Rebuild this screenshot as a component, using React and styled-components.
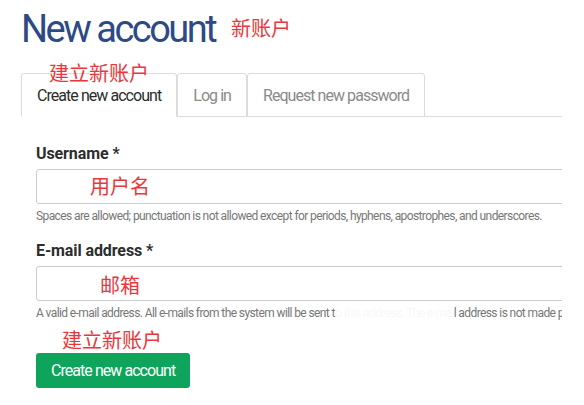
import React from 'react';
import styled, { createGlobalStyle } from 'styled-components';

const GlobalStyle = createGlobalStyle`
  html, body {
    margin: 0;
    padding: 0;
    background: #fff;
  }
  body {
    font-family: Roboto, "Noto Sans", "Noto Sans CJK SC", sans-serif;
    color: #333;
  }
`;

const tabs = [
  { label: 'Create new account', active: true, note: '建立新账户' },
  { label: 'Log in' },
  { label: 'Request new password' },
];

const App = () => {
  const fields = [
    {
      id: 'name',
      label: 'Username',
      note: '用户名',
      noteAt: { left: 54, top: 7 },
      description: 'Spaces are allowed; punctuation is not allowed except for periods, hyphens, apostrophes, and underscores.',
    },
    {
      id: 'mail',
      label: 'E-mail address',
      note: '邮箱',
      noteAt: { left: 64, top: 9 },
      description: (
        <>
          A valid e-mail address. All e-mails from the system will be sent t
          <Erased>o this address. The e-mai</Erased>
          l address is not made public and will only be used if you wish to receive a new password.
        </>
      ),
    },
  ];

  return (
    <>
      <GlobalStyle />
      <Page>
        <Title>New account</Title>
        <Note $left={231} $top={18}>新账户</Note>

        <TabBar>
          {tabs.map((tab) => (
            <Tab key={tab.label} $active={tab.active}>
              {tab.label}
              {tab.note && <Note $left={27} $top={-11}>{tab.note}</Note>}
            </Tab>
          ))}
        </TabBar>

        <Form onSubmit={(e) => e.preventDefault()}>
          {fields.map((field) => (
            <FormGroup key={field.id}>
              <Label htmlFor={field.id}>{field.label} *</Label>
              <InputWrap>
                <Input id={field.id} type="text" />
                <Note $left={field.noteAt.left} $top={field.noteAt.top}>{field.note}</Note>
              </InputWrap>
              <Description>{field.description}</Description>
            </FormGroup>
          ))}

          <Actions>
            <Note $left={26} $top={-23}>建立新账户</Note>
            <SubmitButton type="submit">Create new account</SubmitButton>
          </Actions>
        </Form>
      </Page>
    </>
  );
};

// red annotations laid over the form
const Note = styled.span`
  position: absolute;
  left: ${(p) => p.$left}px;
  top: ${(p) => p.$top}px;
  font-family: "Noto Sans CJK SC", sans-serif;
  font-size: 20px;
  line-height: 20px;
  font-weight: 400;
  letter-spacing: 0;
  color: #e8383d;
  white-space: nowrap;
  pointer-events: none;
`;

const Page = styled.div`
  position: relative;
  width: 562px;
  padding-left: 21px;
  box-sizing: border-box;
  overflow: hidden;
`;

const Title = styled.h1`
  margin: 10px 0 0;
  font-size: 38px;
  line-height: 38px;
  font-weight: 400;
  letter-spacing: -2.5px;
  color: #2d4a85;
`;

const TabBar = styled.ul`
  display: flex;
  margin: 25px 0 0;
  padding: 0;
  list-style: none;
  border-bottom: 1px solid #dcdcdc;
`;

const Tab = styled.li`
  position: relative;
  display: flex;
  align-items: center;
  height: 42px;
  margin-bottom: -1px;
  padding: 0 15px;
  border: 1px solid #dcdcdc;
  border-bottom-color: ${(p) => (p.$active ? '#fff' : '#dcdcdc')};
  border-radius: 3px 3px 0 0;
  font-size: 16px;
  letter-spacing: -0.95px;
  color: ${(p) => (p.$active ? '#2b2b2b' : '#8a8a8a')};
  white-space: nowrap;
`;

const Form = styled.form`
  display: flex;
  flex-direction: column;
  padding: 27px 0 0 15px;
`;

const FormGroup = styled.div`
  display: flex;
  flex-direction: column;
  margin-bottom: 17px;
`;

const Label = styled.label`
  font-size: 16px;
  line-height: 20px;
  font-weight: 700;
  letter-spacing: -0.1px;
  color: #2d2d2d;
`;

const InputWrap = styled.div`
  position: relative;
  margin-top: 5px;
`;

const Input = styled.input`
  display: block;
  box-sizing: border-box;
  width: calc(100% + 40px);
  height: 35px;
  padding: 0 12px;
  border: 1px solid #cccccc;
  border-radius: 3px;
  font-size: 16px;
  font-family: Roboto, sans-serif;
  background: #fff;

  &:focus {
    outline: none;
  }
`;

const Description = styled.div`
  margin-top: 5px;
  font-size: 12px;
  line-height: 15px;
  letter-spacing: -0.6px;
  color: #777;
  white-space: nowrap;
`;

const Erased = styled.span`
  color: #f8f8f8;
`;

const Actions = styled.div`
  position: relative;
  display: flex;
  margin-top: 15px;
`;

const SubmitButton = styled.button`
  height: 35px;
  padding: 0 15px;
  border: none;
  border-radius: 3px;
  background: #0fa45c;
  color: #fff;
  font-family: Roboto, sans-serif;
  font-size: 16px;
  letter-spacing: -0.95px;
  cursor: pointer;
`;

export default App;
